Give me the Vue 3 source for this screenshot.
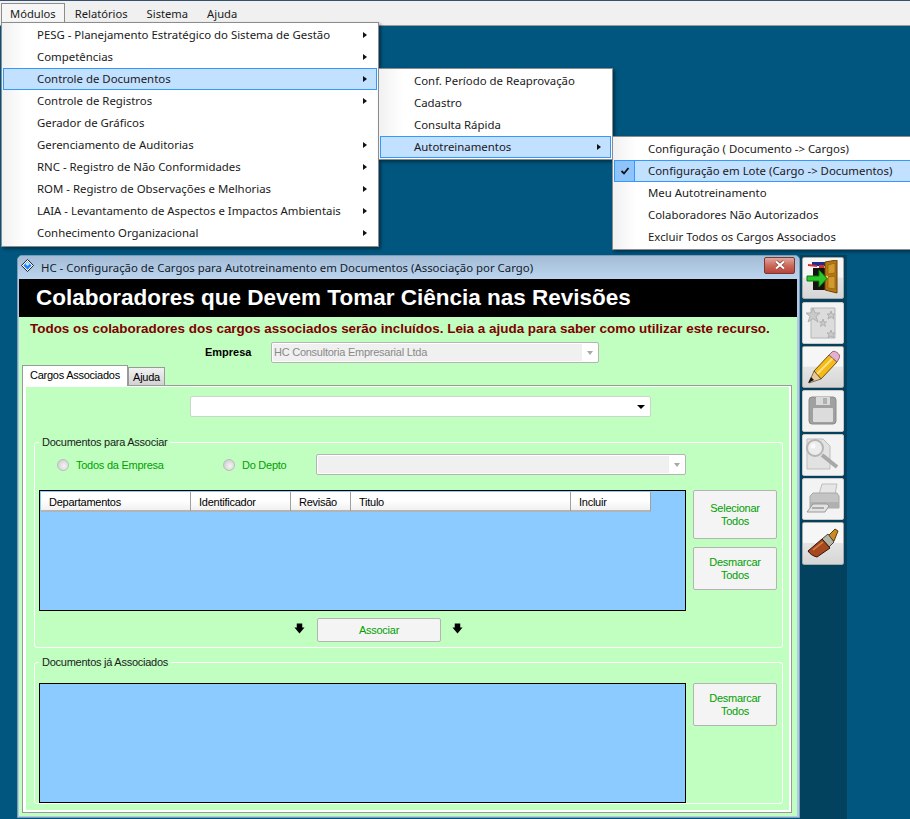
<script setup>
const topItems = ['Módulos', 'Relatórios', 'Sistema', 'Ajuda']

const menuModulos = [
  { label: 'PESG - Planejamento Estratégico do Sistema de Gestão', sub: true },
  { label: 'Competências', sub: true },
  { label: 'Controle de Documentos', sub: true, active: true },
  { label: 'Controle de Registros', sub: true },
  { label: 'Gerador de Gráficos' },
  { label: 'Gerenciamento de Auditorias', sub: true },
  { label: 'RNC - Registro de Não Conformidades', sub: true },
  { label: 'ROM - Registro de Observações e Melhorias', sub: true },
  { label: 'LAIA - Levantamento de Aspectos e Impactos Ambientais', sub: true },
  { label: 'Conhecimento Organizacional', sub: true }
]

const menuDocs = [
  { label: 'Conf. Período de Reaprovação' },
  { label: 'Cadastro' },
  { label: 'Consulta Rápida' },
  { label: 'Autotreinamentos', sub: true, active: true }
]

const menuAuto = [
  { label: 'Configuração ( Documento -> Cargos)' },
  { label: 'Configuração em Lote (Cargo -> Documentos)', active: true, checked: true },
  { label: 'Meu Autotreinamento' },
  { label: 'Colaboradores Não Autorizados' },
  { label: 'Excluir Todos os Cargos Associados' }
]

const menus = [
  { id: 'm1', items: menuModulos },
  { id: 'm2', items: menuDocs },
  { id: 'm3', items: menuAuto }
]

const columns = [
  { label: 'Departamentos', width: 150 },
  { label: 'Identificador', width: 100 },
  { label: 'Revisão', width: 60 },
  { label: 'Titulo', width: 220 },
  { label: 'Incluir', width: 80 }
]
</script>

<template>
  <div class="desktop">
    <div class="menubar">
      <div v-for="(t, i) in topItems" :key="t" class="top-item" :class="{ open: i === 0 }">{{ t }}</div>
    </div>

    <div class="workspace">
      <div class="window">
        <div class="titlebar">
          <svg class="win-icon" viewBox="0 0 14 14">
            <path d="M7 .5 13.5 7 7 13.5 .5 7Z" fill="#fff" stroke="#0b1020" />
            <path d="M7 2.5 11.5 7 7 11.5 2.5 7Z" fill="#1f7fff" />
            <path d="M7 3 9.5 5.5 7 7.5 4.5 5.5Z" fill="#bfe6ff" />
          </svg>
          <span class="win-title">HC - Configuração de Cargos para Autotreinamento em Documentos (Associação por Cargo)</span>
          <div class="close-btn">
            <svg viewBox="0 0 14 10" width="14" height="10">
              <path d="M3 1.5 11 8.5M11 1.5 3 8.5" stroke="#8a3a32" stroke-width="3.6" />
              <path d="M3 1.5 11 8.5M11 1.5 3 8.5" stroke="#fff" stroke-width="2.2" />
            </svg>
          </div>
        </div>

        <div class="content">
          <div class="banner">Colaboradores que Devem Tomar Ciência nas Revisões</div>
          <div class="notice">Todos os colaboradores dos cargos associados serão incluídos. Leia a ajuda para saber como utilizar este recurso.</div>

          <div class="empresa-row">
            <span class="empresa-label">Empresa</span>
            <div class="combo disabled empresa-combo">
              <span class="combo-text">HC Consultoria Empresarial Ltda</span>
              <span class="combo-arrow"></span>
            </div>
          </div>

          <div class="tabs">
            <div class="tab active">Cargos Associados</div>
            <div class="tab">Ajuda</div>
          </div>

          <div class="panel">
            <div class="cargo-row">
              <div class="combo cargo-combo"><span class="combo-text"></span><span class="combo-arrow dark"></span></div>
            </div>

            <div class="group group-a">
              <div class="legend">Documentos para Associar</div>
              <div class="radio-row">
                <span class="radio"></span>
                <span class="radio-label first">Todos da Empresa</span>
                <span class="radio"></span>
                <span class="radio-label second">Do Depto</span>
                <div class="combo disabled depto-combo">
                  <span class="combo-text"></span>
                  <span class="combo-arrow"></span>
                </div>
              </div>

              <div class="grid-row">
                <div class="grid grid-a">
                  <div class="grid-head">
                    <div v-for="c in columns" :key="c.label" class="col" :style="{ width: c.width + 'px' }">{{ c.label }}</div>
                  </div>
                </div>
                <div class="side-buttons">
                  <button class="btn tall">Selecionar<br>Todos</button>
                  <button class="btn">Desmarcar<br>Todos</button>
                </div>
              </div>

              <div class="assoc-row">
                <svg class="down" viewBox="0 0 12 12"><path d="M3 .5h6v4.5h2.5L6 11.5 .5 5H3Z" fill="#000" /></svg>
                <button class="btn assoc">Associar</button>
                <svg class="down" viewBox="0 0 12 12"><path d="M3 .5h6v4.5h2.5L6 11.5 .5 5H3Z" fill="#000" /></svg>
              </div>
            </div>

            <div class="group group-b">
              <div class="legend">Documentos já Associados</div>
              <div class="grid-row">
                <div class="grid grid-b"></div>
                <div class="side-buttons">
                  <button class="btn">Desmarcar<br>Todos</button>
                </div>
              </div>
            </div>
          </div>
        </div>
      </div>

      <div class="toolbar">
        <!-- sair -->
        <div class="tool on">
          <svg viewBox="0 0 36 36" width="36" height="36">
            <path d="M7 2h14v4H7Z" fill="#1b2f8c" />
            <path d="M3 4l9 1 0 2-9-1Z" fill="#d23030" />
            <path d="M14 5h5v4h-5Z" fill="#d23030" />
            <path d="M8 8h13v22H8Z" fill="#14140f" />
            <path d="M20 2 32 0v33l-12-3Z" fill="#b9770f" stroke="#6b4308" />
            <path d="M23 5l7-2v10l-7 1ZM23 17l7-1v13l-7-1Z" fill="#d19a2e" stroke="#8d5f10" stroke-width=".7" />
            <circle cx="22" cy="17" r="1" fill="#f5e07a" />
            <path d="M2 16h12v-6l8 8.500-8 8.500v-6H2Z" fill="#2bc62b" stroke="#0d7a0d" />
          </svg>
        </div>
        <!-- novo -->
        <div class="tool">
          <svg viewBox="0 0 36 36" width="36" height="36">
            <path d="M6 3h24v30H6Z" fill="#dcdcdc" stroke="#b5b5b5" />
            <path d="M8 3l2 5h5l-4 3.500 2 5.500-5-3.500-5 3.500 2-5.500-4-3.500h5Z" fill="#cacaca" stroke="#b0b0b0" />
            <path d="M26 6l1 3h3l-2 2 1 3-3-2-3 2 1-3-2-2h3Z" fill="#cacaca" stroke="#b0b0b0" />
            <path d="M18 14l1 3h2.500l-2 1.500 1 3-2.500-2-2.500 2 1-3-2-1.500H17Z" fill="#cacaca" stroke="#b0b0b0" />
            <path d="M26 25l1 3h3l-2 2 1 3-3-2-3 2 1-3-2-2h3Z" fill="#cacaca" stroke="#b0b0b0" />
          </svg>
        </div>
        <!-- editar -->
        <div class="tool on">
          <svg viewBox="0 0 36 36" width="36" height="36">
            <path d="M9 22 24 6l8 7-16 17Z" fill="#f5b91a" stroke="#6e520c" />
            <path d="M12 25 28 9" stroke="#ffe27a" stroke-width="2" />
            <path d="M24 6l3-3c1-1 3-1 5 .5s3 3 2.500 5L32 13Z" fill="#e6b0cc" stroke="#8a6a7a" />
            <path d="M9 22l7 8-12 4Z" fill="#e8c998" stroke="#33291a" stroke-width=".6" />
            <path d="M6 28l3 3-6 3Z" fill="#111" />
          </svg>
        </div>
        <!-- salvar -->
        <div class="tool">
          <svg viewBox="0 0 36 36" width="36" height="36">
            <rect x="4" y="4" width="27" height="27" rx="3" fill="#a0a0a0" stroke="#8c8c8c" />
            <rect x="11" y="4" width="14" height="8" fill="#dadada" />
            <rect x="18" y="5" width="4" height="6" fill="#b0b0b0" />
            <rect x="8" y="15" width="20" height="14" rx="1" fill="#dcdcdc" />
          </svg>
        </div>
        <!-- consultar -->
        <div class="tool">
          <svg viewBox="0 0 36 36" width="36" height="36">
            <path d="M2 2h16l7 7v23H2Z" fill="#e2e2e2" stroke="#bdbdbd" />
            <circle cx="10" cy="11" r="8" fill="#ececec" stroke="#b5b5b5" stroke-width="2" />
            <circle cx="8" cy="9" r="2.500" fill="#fafafa" />
            <path d="M17 18 32 30" stroke="#a8a8a8" stroke-width="4" />
          </svg>
        </div>
        <!-- imprimir -->
        <div class="tool">
          <svg viewBox="0 0 36 36" width="36" height="36">
            <path d="M17 3h15l-2 10H14Z" fill="#e6e6e6" stroke="#bdbdbd" />
            <path d="M8 12h24l2 3v12H5V15Z" fill="#c4c4c4" stroke="#a8a8a8" />
            <path d="M5 21h29v6H5Z" fill="#b0b0b0" />
            <path d="M8 23h14l2 2-4 6H2Z" fill="#e2e2e2" stroke="#9a9a9a" />
            <path d="M7 27h12" stroke="#777" />
          </svg>
        </div>
        <!-- limpar -->
        <div class="tool on">
          <svg viewBox="0 0 36 36" width="36" height="36">
            <path d="M23 10 30 3l3 2-4 10Z" fill="#c98a22" stroke="#5e3d0c" />
            <path d="M17 13l6-5 6 8-5 5Z" fill="#b5b5a5" stroke="#444" />
            <path d="M3 25 17 13l8 9-13 9c-4-1-7-3-9-6Z" fill="#a8481e" stroke="#2d1508" />
            <path d="M8 24 18 16" stroke="#d98a50" stroke-width="1.500" />
          </svg>
        </div>
      </div>
    </div>

    <!-- menus abertos -->
    <div v-for="m in menus" :key="m.id" class="popup" :class="m.id">
      <div v-for="it in m.items" :key="it.label" class="popup-item" :class="{ active: it.active }">
        <span class="check" :class="{ checked: it.checked }">
          <svg v-if="it.checked" viewBox="0 0 10 10" width="10" height="10">
            <path d="M1.500 5 4 7.500 8.500 2" fill="none" stroke="#111" stroke-width="1.800" />
          </svg>
        </span>
        <span class="popup-label">{{ it.label }}</span>
        <span v-if="it.sub" class="sub-arrow"></span>
      </div>
    </div>
  </div>
</template>

<style scoped>
.desktop {
  position: relative;
  width: 910px;
  height: 819px;
  overflow: hidden;
  background: #00567f;
  font-family: "Liberation Sans", Arial, sans-serif;
  font-size: 11px;
  letter-spacing: -0.25px;
  color: #000;
}

/* barra de menu */
.menubar {
  display: flex;
  box-sizing: border-box;
  height: 26px;
  padding: 2px 0 0 1px;
  background: #f0f0f0;
  border-top: 1px solid #35506e;
  border-bottom: 1px solid #9a9a9a;
  font-family: "Noto Sans", sans-serif;
  font-size: 11.2px;
  letter-spacing: 0;
}

.top-item {
  box-sizing: border-box;
  height: 23px;
  padding: 0 8px;
  margin-right: 1px;
  line-height: 19px;
  color: #1a1a1a;
  border: 1px solid transparent;
  border-bottom: 0;
}

.top-item.open {
  background: #f6f6f6;
  border-color: #8c8c8c;
}

/* area de trabalho */
.workspace {
  display: flex;
  padding: 229px 0 0 17px;
}

.window {
  box-sizing: border-box;
  width: 783px;
  height: 563px;
  padding: 0 2px 2px 1px;
  background: #b0cae6;
  border: 1px solid #7d9cb8;
  border-radius: 5px 5px 0 0;
}

.titlebar {
  display: flex;
  align-items: center;
  height: 23px;
  padding: 0 2px 0 1px;
  background: linear-gradient(#a4bcd6, #bcd5ee);
  margin: 0 -2px 0 -1px;
  border-radius: 5px 5px 0 0;
}

.win-icon {
  width: 13px;
  height: 13px;
  margin: -5px 7px 0 2px;
}

.win-title {
  flex: 1;
  font-family: "Noto Sans", sans-serif;
  font-size: 11.4px;
  letter-spacing: 0;
  color: #14202c;
}

.close-btn {
  display: flex;
  align-items: center;
  justify-content: center;
  box-sizing: border-box;
  width: 31px;
  height: 17px;
  margin: -5px 2px 0 0;
  background: linear-gradient(#e0a89c, #cc6a5c 50%, #b8443a);
  border: 1px solid #7a3a34;
  border-radius: 2px;
}

.content {
  box-sizing: border-box;
  height: 537px;
  background: #c0ffc0;
}

.banner {
  height: 38px;
  padding-left: 17px;
  background: #000;
  color: #fff;
  font-weight: bold;
  font-size: 22.5px;
  letter-spacing: 0;
  line-height: 38px;
  white-space: nowrap;
}

.notice {
  padding: 4px 0 0 11px;
  height: 19px;
  line-height: 16px;
  font-weight: bold;
  font-size: 13.45px;
  letter-spacing: 0;
  color: #800000;
  white-space: nowrap;
}

.empresa-row {
  display: flex;
  align-items: center;
  height: 20px;
  margin-top: 2px;
  padding-left: 186px;
}

.empresa-label {
  width: 66px;
  font-weight: bold;
  font-size: 11px;
  letter-spacing: 0;
}

.combo {
  display: flex;
  align-items: center;
  box-sizing: border-box;
  background: #fff;
  border: 1px solid #b4b4b4;
  border-radius: 2px;
}

.combo-text {
  flex: 1;
  align-self: stretch;
  margin: 1px 0 1px 1px;
  padding-left: 1px;
  line-height: 16px;
  white-space: nowrap;
  overflow: hidden;
}

.combo.disabled .combo-text {
  background: #f0f0f0;
  color: #8a8a8a;
}

.combo-arrow {
  width: 0;
  height: 0;
  margin: 1px 5px 0;
  border-left: 3.5px solid transparent;
  border-right: 3.5px solid transparent;
  border-top: 4px solid #a8a8a8;
}

.combo-arrow.dark {
  border-left-width: 4px;
  border-right-width: 4px;
  border-top-color: #000;
}

.empresa-combo {
  width: 328px;
  height: 21px;
}

.tabs {
  display: flex;
  align-items: flex-end;
  height: 21px;
  margin: 2px 0 0 3px;
}

.tab {
  box-sizing: border-box;
  width: 37px;
  height: 18px;
  line-height: 18px;
  text-align: center;
  white-space: nowrap;
  border: 1px solid #9a9a9a;
  border-bottom: 0;
  background: linear-gradient(#f2f2f2, #d2d2d2);
}

.tab.active {
  width: 106px;
  height: 21px;
  padding-left: 7px;
  line-height: 19px;
  text-align: left;
  background: #fff;
  margin-bottom: -1px;
  position: relative;
  z-index: 1;
}

.panel {
  box-sizing: border-box;
  height: 428px;
  width: 770px;
  margin-left: 3px;
  padding: 10px 0 0 3px;
  background: #c0ffc0;
  border: 1px solid #9a9a9a;
  box-shadow: inset 3px 1px 0 #fff, inset -2px -2px 0 #fff;
}

.cargo-row {
  height: 21px;
  padding-left: 164px;
}

.cargo-combo {
  width: 461px;
  height: 21px;
  border-color: #c8d8c8;
}

.cargo-combo .combo-text {
  margin: 0;
}

/* grupos */
.group {
  box-sizing: border-box;
  position: relative;
  width: 749px;
  margin-left: 8px;
  border: 1px solid #fff;
  border-radius: 3px;
}

.group-a {
  height: 206px;
  margin-top: 25px;
  padding: 11px 0 0 4px;
}

.group-b {
  height: 142px;
  margin-top: 14px;
  padding: 20px 0 0 4px;
}

.legend {
  position: absolute;
  top: -7px;
  left: 4px;
  padding: 0 3px;
  background: #c0ffc0;
  line-height: 13px;
  color: #1a1a1a;
}

.radio-row {
  display: flex;
  align-items: center;
  height: 21px;
}

.radio {
  box-sizing: border-box;
  width: 12px;
  height: 12px;
  margin-left: 18px;
  border-radius: 50%;
  background: radial-gradient(circle at 60% 60%, #f4f4f4, #c6c6c6);
  border: 1px solid #bcbcbc;
}

.radio-label {
  margin-left: 7px;
  color: #00a000;
}

.radio-label.first {
  width: 129px;
}

.radio-label.second {
  width: 62px;
}

.depto-combo {
  width: 370px;
  height: 21px;
  margin-left: 12px;
}

.grid-row {
  display: flex;
  margin-top: 15px;
}

.group-b .grid-row {
  margin-top: 0;
}

.grid {
  box-sizing: border-box;
  width: 647px;
  background: #8ccbff;
  border: 1px solid #000;
}

.grid-a {
  height: 121px;
}

.grid-b {
  height: 120px;
}

.grid-head {
  display: flex;
  height: 20px;
  margin-top: 1px;
  padding-left: 1px;
  width: 611px;
}

.col {
  box-sizing: border-box;
  height: 20px;
  padding-left: 8px;
  line-height: 20px;
  background: linear-gradient(#fff, #fff 45%, #f0f0f0);
  border-right: 1px solid #a0a0a0;
  border-bottom: 2px solid #b4b4b4;
}

.side-buttons {
  display: flex;
  flex-direction: column;
  gap: 8px;
  margin-left: 7px;
}

.btn {
  display: block;
  box-sizing: border-box;
  width: 84px;
  height: 43px;
  padding: 0;
  background: #f4f4f4;
  border: 1px solid #b4b4b4;
  border-radius: 2px;
  font-family: "Liberation Sans", Arial, sans-serif;
  font-size: 11px;
  letter-spacing: -0.25px;
  line-height: 13px;
  color: #00a000;
}

.btn.tall {
  height: 49px;
}

.assoc-row {
  display: flex;
  align-items: center;
  height: 24px;
  margin-top: 7px;
  margin-left: 255px;
}

.btn.assoc {
  flex: none;
  width: 124px;
  height: 24px;
  margin: 0 11px 0 12px;
}

.down {
  flex: none;
  width: 11px;
  height: 11px;
  margin-top: -4px;
}

/* barra lateral */
.toolbar {
  display: flex;
  flex-direction: column;
  gap: 2px;
  box-sizing: border-box;
  width: 47px;
  height: 565px;
  padding: 2px 3px 0 2px;
  background: #03425f;
}

.tool {
  display: flex;
  align-items: center;
  justify-content: center;
  box-sizing: border-box;
  width: 42px;
  height: 42px;
  background: #f3f3f3;
  border: 1px solid #c9c9c9;
  border-radius: 2px;
}

.tool:first-child {
  margin-bottom: 1px;
}

.tool:last-child {
  height: 43px;
}

.tool.on {
  background: linear-gradient(#f6f6f6 48%, #e4e4e4 50%, #d6d6d6);
  border-color: #a8a8a8;
}

/* menus */
.popup {
  position: absolute;
  box-sizing: border-box;
  padding: 1px;
  background: linear-gradient(90deg, #f1f1f1 0, #fff 24px);
  border: 1px solid #8c8c8c;
  box-shadow: 2px 2px 3px rgba(0, 0, 0, 0.4);
  font-family: "Noto Sans", sans-serif;
  font-size: 11.4px;
  letter-spacing: 0;
  color: #1a1a1a;
}

.m1 {
  left: 1px;
  top: 22px;
  width: 378px;
  height: 225px;
}

.m2 {
  left: 378px;
  top: 68px;
  width: 235px;
  height: 92px;
}

.m3 {
  left: 612px;
  top: 136px;
  width: 310px;
  height: 114px;
}

.popup-item {
  display: flex;
  align-items: center;
  box-sizing: border-box;
  height: 22px;
  border: 1px solid transparent;
}

.popup-item.active {
  background: #c2e0ff;
  border-color: #3399ff;
}

.check {
  display: flex;
  align-items: center;
  justify-content: center;
  box-sizing: border-box;
  flex: none;
  width: 33px;
  height: 20px;
}

.check.checked {
  width: 20px;
  margin-right: 13px;
  background: #8fc4fa;
  border-right: 1px solid #3399ff;
}

.popup-label {
  flex: 1;
  margin-top: -2px;
  white-space: nowrap;
}

.sub-arrow {
  width: 0;
  height: 0;
  margin-right: 9px;
  border-top: 3.5px solid transparent;
  border-bottom: 3.5px solid transparent;
  border-left: 4px solid #111;
}

.m3 .popup-item {
  width: 297px;
}
</style>
